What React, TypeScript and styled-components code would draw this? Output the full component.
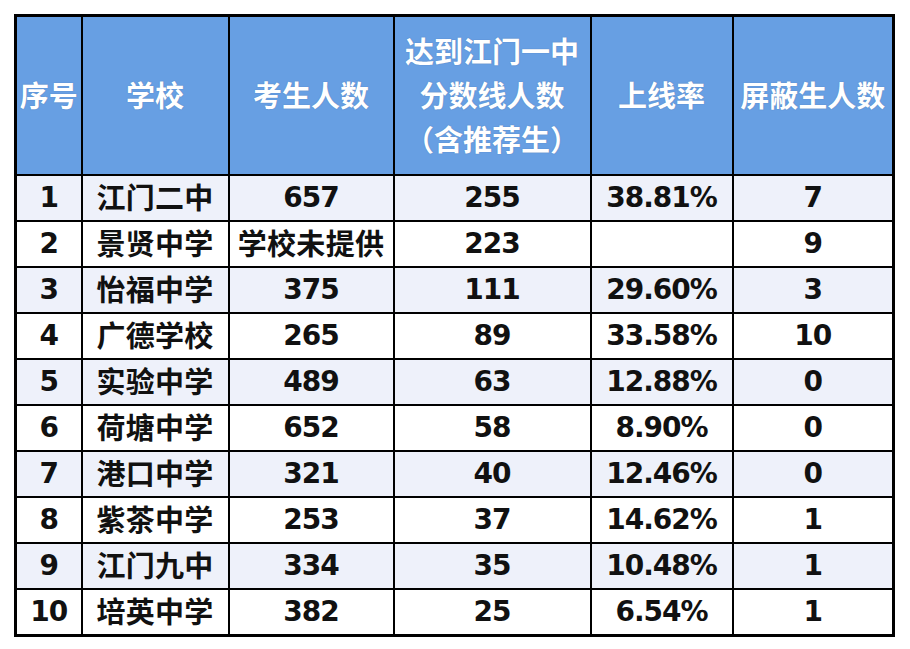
import styled, {createGlobalStyle} from 'styled-components';

const GlobalStyle = createGlobalStyle`
	html, body {
		margin: 0;
		padding: 0;
		background: #ffffff;
	}
	body {
		font-family: "Open Sans", "Noto Sans CJK SC", sans-serif;
	}
`;

const Page = styled.div({
	width: 910,
	height: 649,
	padding: '14px 0 0 14px',
	boxSizing: 'border-box',
});

const Table = styled.table({
	borderCollapse: 'collapse',
	tableLayout: 'fixed',
	width: 881,
	border: '3px solid #000',
	fontWeight: 700,
	fontSize: 29,
	color: '#111',
});

const HeadCell = styled.th({
	height: 157,
	padding: 0,
	border: '2px solid #000',
	background: '#679fe3',
	color: '#fff',
	fontWeight: 700,
	lineHeight: '44px',
	textAlign: 'center',
	verticalAlign: 'middle',
	whiteSpace: 'nowrap',
	textShadow: '0 0 1px rgba(40, 70, 120, 0.5)',
});

const Row = styled.tr<{$striped: boolean}>(props => ({
	background: props.$striped ? '#eef1fa' : '#ffffff',
}));

const Cell = styled.td<{$numeric: boolean}>(props => ({
	height: 44,
	padding: 0,
	border: '2px solid #000',
	textAlign: 'center',
	verticalAlign: 'middle',
	lineHeight: '40px',
	whiteSpace: 'nowrap',
	fontFamily: props.$numeric
		? '"DejaVu Sans", "Noto Sans CJK SC", sans-serif'
		: '"Open Sans", "Noto Sans CJK SC", sans-serif',
	fontSize: props.$numeric ? 28 : 29,
	letterSpacing: props.$numeric ? -1 : 0.3,
}));

const columns = [66, 147, 165, 197, 142, 161];

const headers = [
	['序号'],
	['学校'],
	['考生人数'],
	['达到江门一中', '分数线人数', '（含推荐生）'],
	['上线率'],
	['屏蔽生人数'],
];

const rows = [
	['1', '江门二中', '657', '255', '38.81%', '7'],
	['2', '景贤中学', '学校未提供', '223', '', '9'],
	['3', '怡福中学', '375', '111', '29.60%', '3'],
	['4', '广德学校', '265', '89', '33.58%', '10'],
	['5', '实验中学', '489', '63', '12.88%', '0'],
	['6', '荷塘中学', '652', '58', '8.90%', '0'],
	['7', '港口中学', '321', '40', '12.46%', '0'],
	['8', '紫茶中学', '253', '37', '14.62%', '1'],
	['9', '江门九中', '334', '35', '10.48%', '1'],
	['10', '培英中学', '382', '25', '6.54%', '1'],
];

const isNumeric = (value: string) => /^[\d.%]+$/.test(value);

export default function App() {
	return (
		<Page>
			<GlobalStyle />
			<Table>
				<colgroup>
					{columns.map((w, i) => (
						<col key={i} style={{width: w}} />
					))}
				</colgroup>
				<thead>
					<tr>
						{headers.map((lines, i) => (
							<HeadCell key={i}>
								{lines.map((line, j) => (
									<div key={j}>{line}</div>
								))}
							</HeadCell>
						))}
					</tr>
				</thead>
				<tbody>
					{rows.map((row, i) => (
						<Row key={i} $striped={i % 2 === 0}>
							{row.map((value, j) => (
								<Cell key={j} $numeric={isNumeric(value)}>
									{value}
								</Cell>
							))}
						</Row>
					))}
				</tbody>
			</Table>
		</Page>
	);
}
